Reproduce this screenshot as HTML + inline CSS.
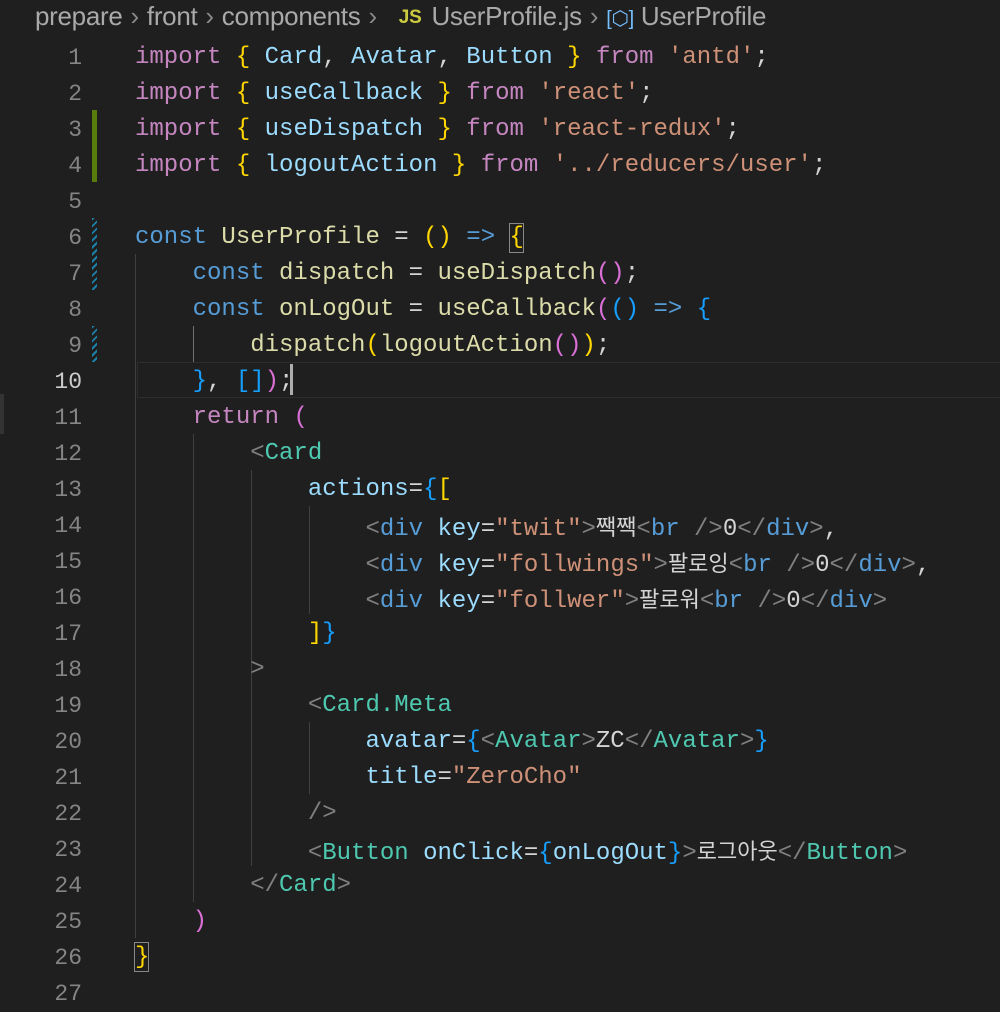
<!DOCTYPE html>
<html><head><meta charset="utf-8"><style>
body{margin:0;width:1000px;height:1010px;background:#1f1f1f;overflow:hidden;position:relative;font-family:"Liberation Mono","Noto Sans CJK KR",monospace;}
.bc{position:absolute;left:35px;top:1px;font:26px "Liberation Sans",sans-serif;color:#a9a9a9;white-space:nowrap;letter-spacing:-0.3px}
.bc .s{color:#8a8a8a;margin:0 8px;}
.js{color:#cbcb41;font-weight:bold;font-size:19px;margin:0 10px 0 14px;vertical-align:2px}
.ln{position:absolute;left:0;width:82px;text-align:right;font-size:23px;color:#858585;height:36px;line-height:36px;}
.cl{position:absolute;left:135px;font-size:24px;height:36px;line-height:36px;white-space:pre;color:#d4d4d4;}
.k{color:#c586c0}.y{color:#ffd700}.v{color:#9cdcfe}.s2{color:#ce9178}.c{color:#569cd6}.f{color:#dcdcaa}
.t{color:#4ec9b0}.g{color:#808080}.p{color:#da70d6}.b{color:#179fff}.w{color:#d4d4d4}
.ko{font-size:22px;font-family:"Noto Sans CJK KR",sans-serif;}
.guide{position:absolute;width:1px;background:#404040;}
.ln,.cl{margin-top:2px}
</style></head><body>
<div class="bc">prepare<span class="s">›</span>front<span class="s">›</span>components<span class="s">›</span><span class="js">JS</span>UserProfile.js<span class="s">›</span><span style="color:#75beff;font-size:20px">[⬡]</span> UserProfile</div>

<div style="position:absolute;left:137px;top:362px;width:863px;height:34px;border:1px solid #2d2d2d;"></div>
<div style="position:absolute;left:0;top:394px;width:4px;height:40px;background:#333"></div>

<div style="position:absolute;left:92px;top:110px;width:5px;height:72px;background:#587c0c"></div>
<div style="position:absolute;left:92px;top:218px;width:5px;height:72px;background:repeating-linear-gradient(135deg,#1b81a8 0 2px,transparent 2px 5px)"></div>
<div style="position:absolute;left:92px;top:326px;width:5px;height:36px;background:repeating-linear-gradient(135deg,#1b81a8 0 2px,transparent 2px 5px)"></div>

<div class="guide" style="left:135px;top:254px;height:684px"></div>
<div class="guide" style="left:193px;top:326px;height:36px;background:#707070"></div>
<div class="guide" style="left:193px;top:434px;height:468px"></div>
<div class="guide" style="left:251px;top:470px;height:396px"></div>
<div class="guide" style="left:309px;top:506px;height:108px"></div>
<div class="guide" style="left:309px;top:722px;height:72px"></div>

<div style="position:absolute;left:509px;top:223px;width:13px;height:28px;border:1px solid #888"></div>
<div style="position:absolute;left:134px;top:942px;width:13px;height:28px;border:1px solid #888"></div>
<div style="position:absolute;left:290px;top:364px;width:3px;height:31px;background:#aeafad"></div>

<div class="ln" style="top:38px">1</div><div class="cl" style="top:38px"><span class="k">import</span> <span class="y">{</span> <span class="v">Card</span>, <span class="v">Avatar</span>, <span class="v">Button</span> <span class="y">}</span> <span class="k">from</span> <span class="s2">'antd'</span>;</div>
<div class="ln" style="top:74px">2</div><div class="cl" style="top:74px"><span class="k">import</span> <span class="y">{</span> <span class="v">useCallback</span> <span class="y">}</span> <span class="k">from</span> <span class="s2">'react'</span>;</div>
<div class="ln" style="top:110px">3</div><div class="cl" style="top:110px"><span class="k">import</span> <span class="y">{</span> <span class="v">useDispatch</span> <span class="y">}</span> <span class="k">from</span> <span class="s2">'react-redux'</span>;</div>
<div class="ln" style="top:146px">4</div><div class="cl" style="top:146px"><span class="k">import</span> <span class="y">{</span> <span class="v">logoutAction</span> <span class="y">}</span> <span class="k">from</span> <span class="s2">'../reducers/user'</span>;</div>
<div class="ln" style="top:182px">5</div>
<div class="ln" style="top:218px">6</div><div class="cl" style="top:218px"><span class="c">const</span> <span class="f">UserProfile</span> = <span class="y">()</span> <span class="c">=&gt;</span> <span class="y">{</span></div>
<div class="ln" style="top:254px">7</div><div class="cl" style="top:254px">    <span class="c">const</span> <span class="f">dispatch</span> = <span class="f">useDispatch</span><span class="p">()</span>;</div>
<div class="ln" style="top:290px">8</div><div class="cl" style="top:290px">    <span class="c">const</span> <span class="f">onLogOut</span> = <span class="f">useCallback</span><span class="p">(</span><span class="b">()</span> <span class="c">=&gt;</span> <span class="b">{</span></div>
<div class="ln" style="top:326px">9</div><div class="cl" style="top:326px">        <span class="f">dispatch</span><span class="y">(</span><span class="f">logoutAction</span><span class="p">()</span><span class="y">)</span>;</div>
<div class="ln" style="top:362px;color:#ccc">10</div><div class="cl" style="top:362px">    <span class="b">}</span>, <span class="b">[]</span><span class="p">)</span>;</div>
<div class="ln" style="top:398px">11</div><div class="cl" style="top:398px">    <span class="k">return</span> <span class="p">(</span></div>
<div class="ln" style="top:434px">12</div><div class="cl" style="top:434px">        <span class="g">&lt;</span><span class="t">Card</span></div>
<div class="ln" style="top:470px">13</div><div class="cl" style="top:470px">            <span class="v">actions</span>=<span class="b">{</span><span class="y">[</span></div>
<div class="ln" style="top:506px">14</div><div class="cl" style="top:506px">                <span class="g">&lt;</span><span class="c">div</span> <span class="v">key</span>=<span class="s2">"twit"</span><span class="g">&gt;</span><span class="ko">짹짹</span><span class="g">&lt;</span><span class="c">br</span> <span class="g">/&gt;</span>0<span class="g">&lt;/</span><span class="c">div</span><span class="g">&gt;</span>,</div>
<div class="ln" style="top:542px">15</div><div class="cl" style="top:542px">                <span class="g">&lt;</span><span class="c">div</span> <span class="v">key</span>=<span class="s2">"follwings"</span><span class="g">&gt;</span><span class="ko">팔로잉</span><span class="g">&lt;</span><span class="c">br</span> <span class="g">/&gt;</span>0<span class="g">&lt;/</span><span class="c">div</span><span class="g">&gt;</span>,</div>
<div class="ln" style="top:578px">16</div><div class="cl" style="top:578px">                <span class="g">&lt;</span><span class="c">div</span> <span class="v">key</span>=<span class="s2">"follwer"</span><span class="g">&gt;</span><span class="ko">팔로워</span><span class="g">&lt;</span><span class="c">br</span> <span class="g">/&gt;</span>0<span class="g">&lt;/</span><span class="c">div</span><span class="g">&gt;</span></div>
<div class="ln" style="top:614px">17</div><div class="cl" style="top:614px">            <span class="y">]</span><span class="b">}</span></div>
<div class="ln" style="top:650px">18</div><div class="cl" style="top:650px">        <span class="g">&gt;</span></div>
<div class="ln" style="top:686px">19</div><div class="cl" style="top:686px">            <span class="g">&lt;</span><span class="t">Card.Meta</span></div>
<div class="ln" style="top:722px">20</div><div class="cl" style="top:722px">                <span class="v">avatar</span>=<span class="b">{</span><span class="g">&lt;</span><span class="t">Avatar</span><span class="g">&gt;</span>ZC<span class="g">&lt;/</span><span class="t">Avatar</span><span class="g">&gt;</span><span class="b">}</span></div>
<div class="ln" style="top:758px">21</div><div class="cl" style="top:758px">                <span class="v">title</span>=<span class="s2">"ZeroCho"</span></div>
<div class="ln" style="top:794px">22</div><div class="cl" style="top:794px">            <span class="g">/&gt;</span></div>
<div class="ln" style="top:830px">23</div><div class="cl" style="top:830px">            <span class="g">&lt;</span><span class="t">Button</span> <span class="v">onClick</span>=<span class="b">{</span><span class="v">onLogOut</span><span class="b">}</span><span class="g">&gt;</span><span class="ko">로그아웃</span><span class="g">&lt;/</span><span class="t">Button</span><span class="g">&gt;</span></div>
<div class="ln" style="top:866px">24</div><div class="cl" style="top:866px">        <span class="g">&lt;/</span><span class="t">Card</span><span class="g">&gt;</span></div>
<div class="ln" style="top:902px">25</div><div class="cl" style="top:902px">    <span class="p">)</span></div>
<div class="ln" style="top:938px">26</div><div class="cl" style="top:938px"><span class="y">}</span></div>
<div class="ln" style="top:974px">27</div>
</body></html>
